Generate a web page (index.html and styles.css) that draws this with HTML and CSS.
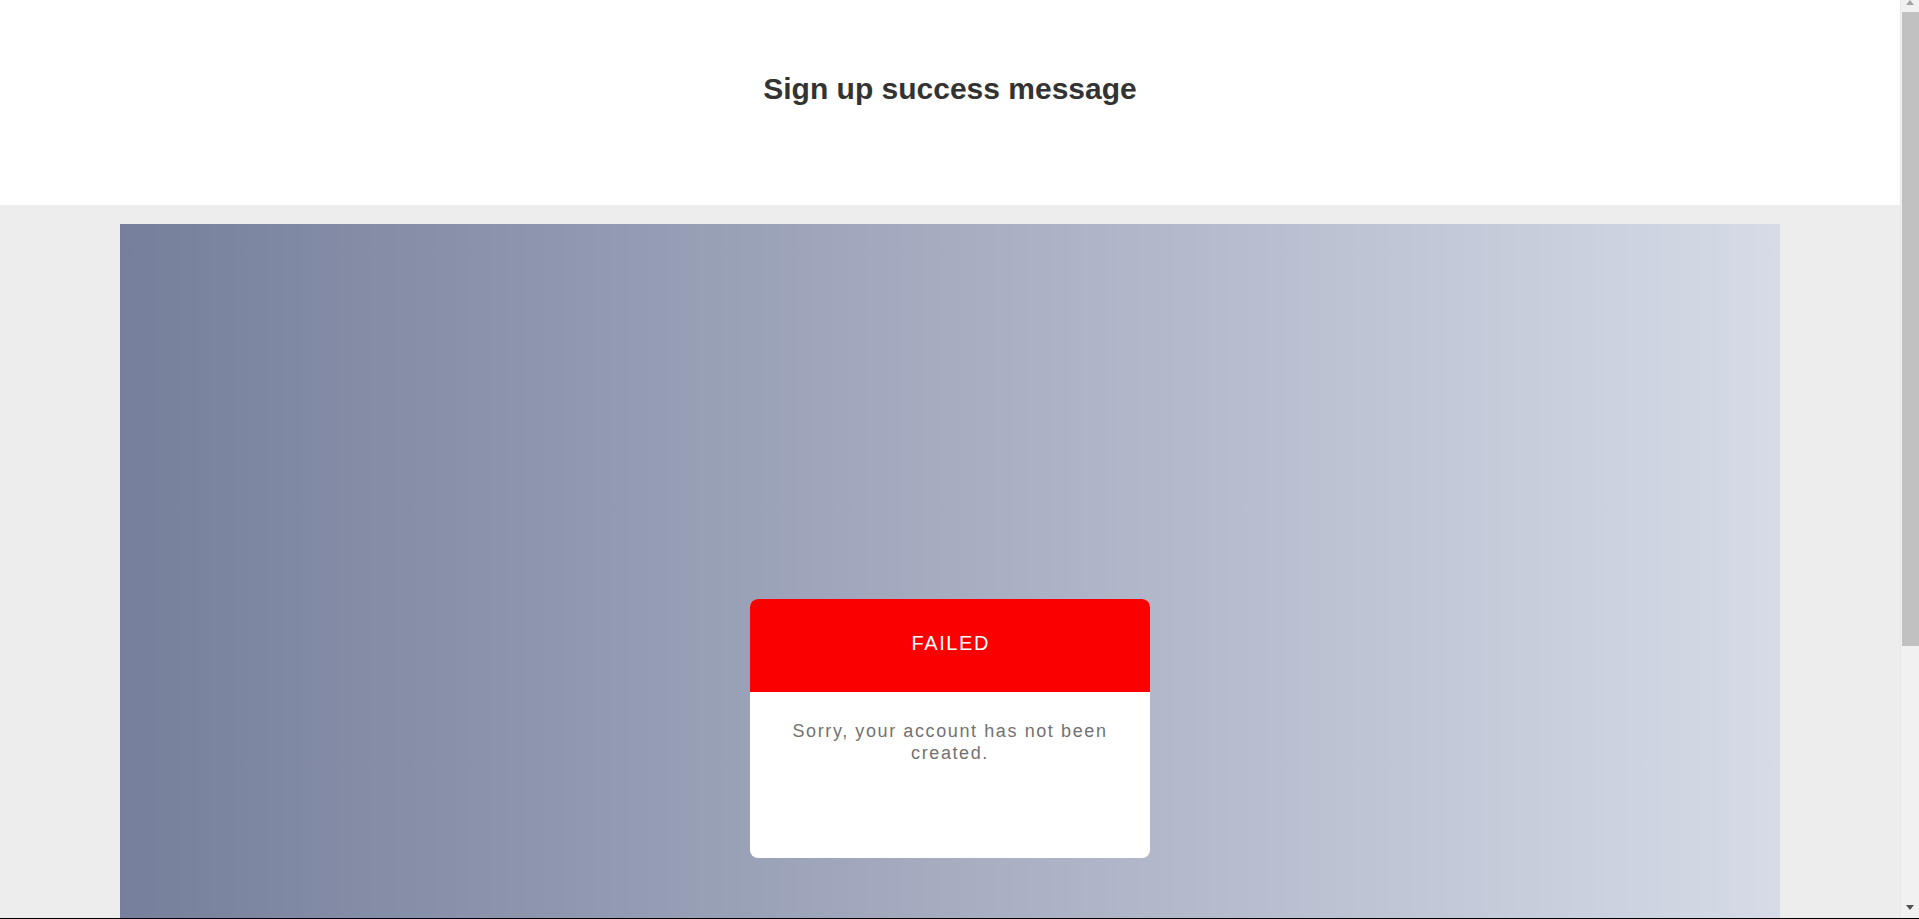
FILE: index.html
```html
<!DOCTYPE html>
<html lang="en">
<head>
<meta charset="utf-8">
<title>Sign up success message</title>
<link rel="stylesheet" href="styles.css">
</head>
<body>
  <header class="page-header">
    <h1 class="page-title">Sign up success message</h1>
  </header>
  <main class="stage">
    <section class="backdrop">
      <div class="card">
        <div class="card-head">FAILED</div>
        <div class="card-body">
          <p class="card-text">Sorry, your account has not been created.</p>
        </div>
      </div>
    </section>
  </main>
  <div class="scrollbar" aria-hidden="true">
    <span class="scroll-arrow scroll-arrow-up"></span>
    <span class="scroll-thumb"></span>
    <span class="scroll-arrow scroll-arrow-down"></span>
  </div>
  <div class="frame-edge" aria-hidden="true"></div>
</body>
</html>
```

FILE: styles.css
```css
* {
  box-sizing: border-box;
}

html, body {
  margin: 0;
  padding: 0;
}

html {
  overflow: hidden;
}

body {
  font-family: "Liberation Sans", Arial, sans-serif;
  background: #ededed;
  width: 1900px;
}

.page-header {
  background: #ffffff;
  height: 205px;
  padding-top: 72px;
  text-align: center;
}

.page-title {
  margin: 0;
  font-size: 30px;
  font-weight: 700;
  color: #333333;
  line-height: normal;
}

.stage {
  padding: 19px 120px;
}

.backdrop {
  height: 1052px;
  background: linear-gradient(to right, #767f9b 0%, #d6dbe7 100%);
  display: flex;
  justify-content: center;
  align-items: flex-start;
  padding-top: 375px;
}

.card {
  width: 400px;
  height: 259px;
  background: #ffffff;
  border-radius: 8px;
  overflow: hidden;
  display: flex;
  flex-direction: column;
}

.card-head {
  height: 93px;
  background: #fa0000;
  color: #ffffff;
  font-size: 20px;
  letter-spacing: 1.6px;
  display: flex;
  align-items: center;
  justify-content: center;
  padding-left: 1.6px;
  padding-bottom: 4px;
}

.card-body {
  padding: 28px 30px 0;
  text-align: center;
}

.card-text {
  margin: 0;
  font-size: 18px;
  line-height: 22px;
  letter-spacing: 1.6px;
  color: #727272;
}

/* simulated browser scrollbar */
.scrollbar {
  position: fixed;
  top: 0;
  right: 0;
  width: 19px;
  height: 919px;
  background: #f1f1f1;
  border-left: 1px solid #e8e8e8;
}

.scroll-thumb {
  position: absolute;
  left: 1px;
  top: 12px;
  width: 17px;
  height: 634px;
  background: #c1c1c1;
}

.scroll-arrow {
  position: absolute;
  left: 5px;
  width: 0;
  height: 0;
  border-left: 4.5px solid transparent;
  border-right: 4.5px solid transparent;
}

.scroll-arrow-up {
  top: 0;
  border-bottom: 5px solid #a3a3a3;
}

.scroll-arrow-down {
  top: 905px;
  border-top: 5px solid #505050;
}

.frame-edge {
  position: fixed;
  left: 0;
  right: 0;
  bottom: 0;
  height: 1px;
  background: #000000;
}
```
